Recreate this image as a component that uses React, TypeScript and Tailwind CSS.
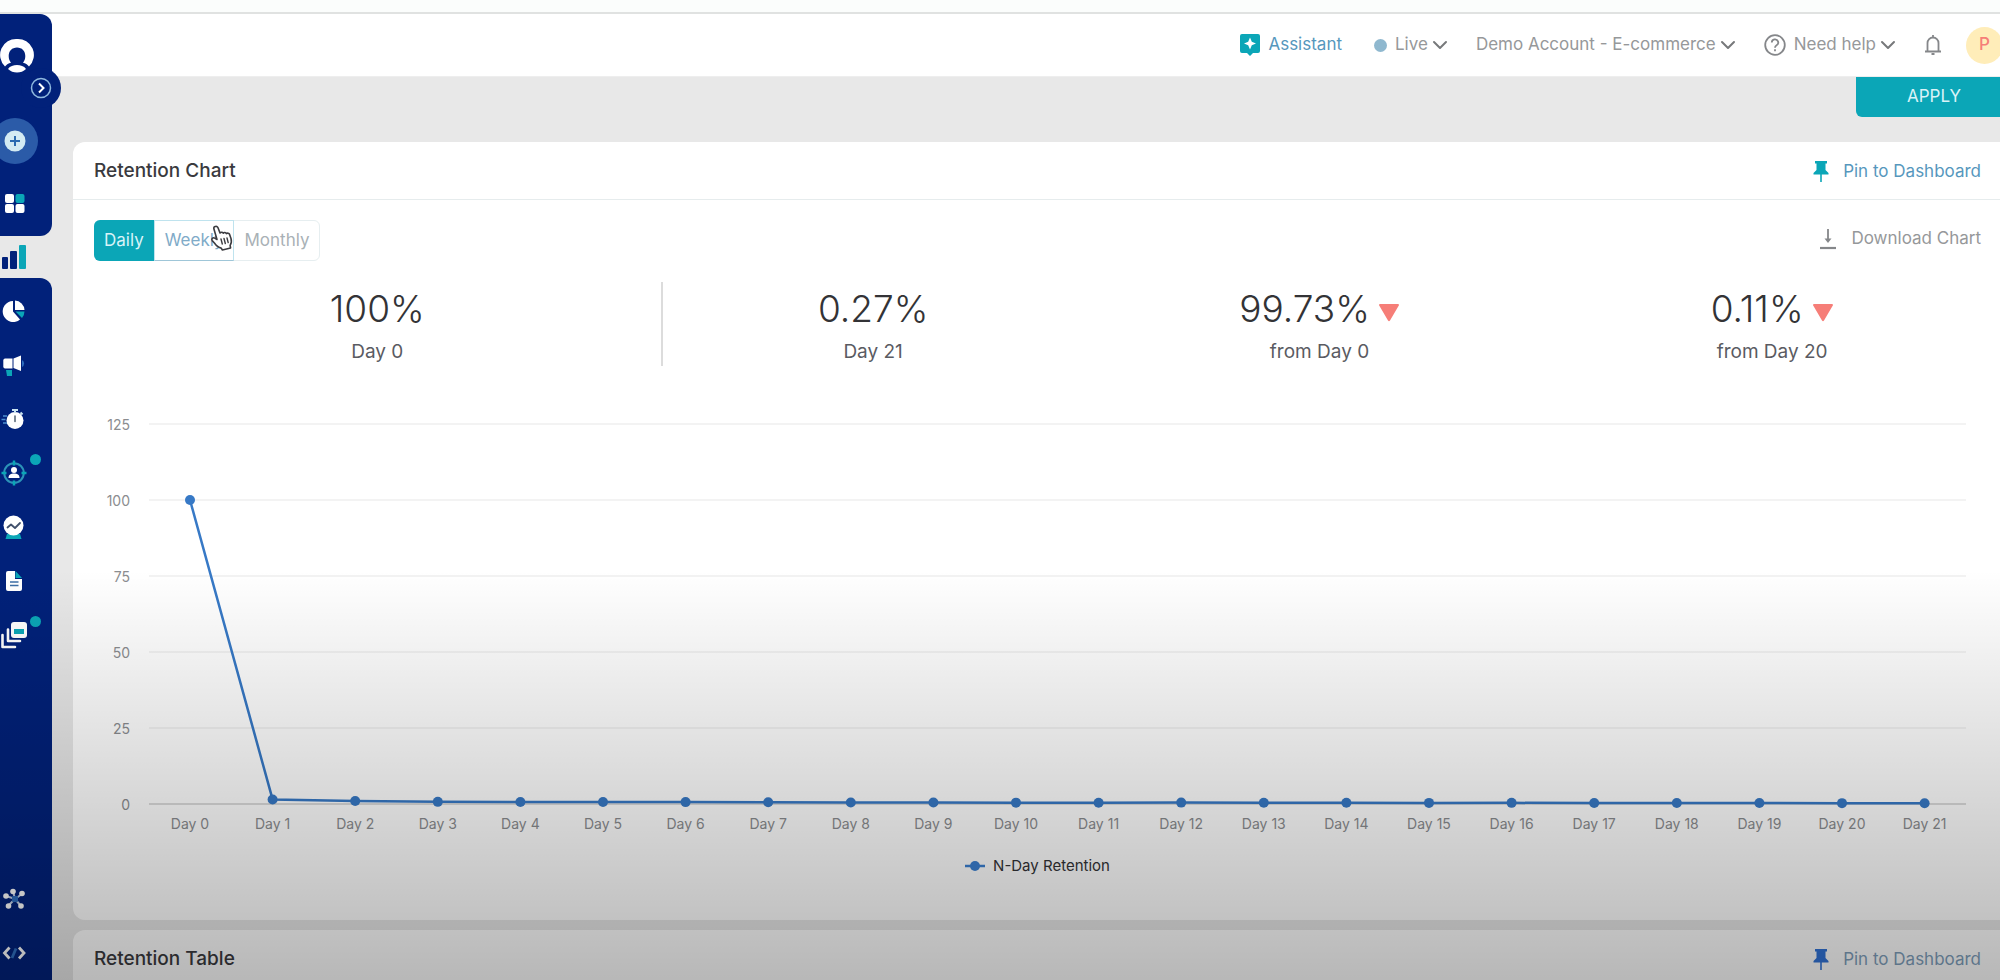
import { useState } from 'react';
import type { ReactNode } from 'react';
import { ChevronDown } from 'lucide-react';

const values = [100, 1.5, 1, 0.7, 0.68, 0.66, 0.62, 0.6, 0.5, 0.5, 0.45, 0.42, 0.46, 0.4, 0.42, 0.36, 0.38, 0.32, 0.3, 0.3, 0.28, 0.27];
const ticks = [125, 100, 75, 50, 25, 0];

// chart space: 76 units per 25 points, days 82.6 units apart
const toX = (day: number) => 96 + day * 82.6;
const toY = (value: number) => 404 - value * 3.04;

const BarsIcon = () => (
  <svg width="28" height="28" viewBox="0 0 28 28">
    <rect x="2" y="14" width="6" height="12" rx="1" fill="#01217a" />
    <rect x="10" y="8" width="7" height="18" rx="1" fill="#01217a" />
    <rect x="19" y="2" width="7" height="24" rx="1" fill="#0ba6b7" />
  </svg>
);

const PieIcon = () => (
  <svg width="28" height="28" viewBox="0 0 28 28">
    <path d="M13 4a10.500 10.500 0 1 0 7 18.500l-7-8z" fill="#fff" />
    <path d="M15 3.500a10 10 0 0 1 9.500 9.500H15z" fill="#fff" />
    <path d="M15.500 14.500h9a10 10 0 0 1-2.500 6.500z" fill="#0ba6b7" />
  </svg>
);

const MegaphoneIcon = () => (
  <svg width="28" height="28" viewBox="0 0 28 28">
    <path d="M5 7.500h7.500v10H5A1.800 1.800 0 0 1 3.300 16V9A1.800 1.800 0 0 1 5 7.500z" fill="#fff" />
    <path d="M13.500 7.500L21 4.500V20l-7.500-3z" fill="#fff" />
    <path d="M22 9a4 4 0 0 1 0 7z" fill="#2f6fc0" />
    <path d="M6 19h6v6H7z" fill="#0ba6b7" />
  </svg>
);

const StopwatchIcon = () => (
  <svg width="28" height="28" viewBox="0 0 28 28" fill="none">
    <circle cx="15" cy="15.500" r="8.500" fill="#fff" />
    <path d="M12 5h6M15 5v3M20.500 7.500l2 2" stroke="#c9e4f1" strokeWidth="2" />
    <path d="M15 11v5.500" stroke="#51606f" strokeWidth="1.500" strokeLinecap="round" />
    <path d="M3 11h4M1.500 14.500h4M3 18h4" stroke="#4c8ed0" strokeWidth="1.300" />
  </svg>
);

const TargetIcon = () => (
  <svg width="28" height="28" viewBox="0 0 28 28" fill="none">
    <circle cx="14" cy="14" r="9.800" stroke="#2b93b8" strokeWidth="2" />
    <path d="M14 1.500v5M14 21.500v5M1.500 14h5M21.500 14h5" stroke="#0ba6b7" strokeWidth="2.500" />
    <circle cx="14" cy="11" r="3" fill="#fff" />
    <path d="M8.500 19c0-3.500 2.500-4.500 5.500-4.500s5.500 1 5.500 4.500z" fill="#fff" />
  </svg>
);

const ForecastIcon = () => (
  <svg width="28" height="28" viewBox="0 0 28 28" fill="none">
    <path d="M7 21h13l1.500 5h-16z" fill="#0ba6b7" />
    <circle cx="13.500" cy="12.500" r="10" fill="#fff" />
    <path d="M7.500 14.500l3.500-3 4 3.500 5-5" stroke="#41506b" strokeWidth="1.800" strokeLinejoin="round" strokeLinecap="round" />
  </svg>
);

const ReportIcon = () => (
  <svg width="28" height="28" viewBox="0 0 28 28" fill="none">
    <path d="M8 4h7v8h7v10a2 2 0 0 1-2 2H8a2 2 0 0 1-2-2V6a2 2 0 0 1 2-2z" fill="#fff" />
    <path d="M15.500 4l6.500 7h-6.500z" fill="#0ba6b7" />
    <path d="M10 15h8.500M10 18.500h8.500" stroke="#3c6ea5" strokeWidth="1.400" />
  </svg>
);

const ContentIcon = () => (
  <svg width="28" height="30" viewBox="0 0 28 30" fill="none">
    <rect x="11" y="2" width="16" height="16" rx="3" fill="#fff" />
    <rect x="14" y="9" width="10" height="5" fill="#0ba6b7" />
    <path d="M8 9.500V21h12" stroke="#fff" strokeWidth="2.600" strokeLinejoin="round" strokeLinecap="round" />
    <path d="M2.500 15v12H15" stroke="#fff" strokeWidth="2.600" strokeLinejoin="round" strokeLinecap="round" />
  </svg>
);

const HubIcon = () => (
  <svg width="28" height="28" viewBox="0 0 28 28">
    <path d="M6 11l9 3 7-5M13 6l2 8-7 7M15 14l6 7" stroke="#c4d3ea" strokeWidth="2" fill="none" />
    <rect x="12" y="11" width="6" height="6" rx="1" fill="#2f6fc0" />
    <g fill="#fff">
      <circle cx="6" cy="11" r="2.800" />
      <circle cx="13" cy="6.500" r="2.800" />
      <circle cx="22" cy="8.500" r="2.800" />
      <circle cx="8.500" cy="21" r="2.800" />
      <circle cx="21" cy="21" r="2.800" />
    </g>
  </svg>
);

const CodeIcon = () => (
  <svg width="28" height="28" viewBox="0 0 28 28" fill="none" strokeWidth="2.800">
    <path d="M9.500 8.500L4.500 14l5 5.500M19 8.500l5 5.500-5 5.500" stroke="#fff" />
    <path d="M16 9.500l-4 9.500" stroke="#2f6fc0" />
  </svg>
);

const PinIcon = ({ className }: { className: string }) => (
  <svg width="16" height="22" viewBox="0 0 16 22" className={className}>
    <path d="M2 0h12v2.500h-1.500V9l3 3v1.500H.5V12l3-3V2.500H2z" fill="currentColor" />
    <path d="M8 13v8" stroke="currentColor" strokeWidth="1.600" />
  </svg>
);

const DownTriangle = () => (
  <svg width="22" height="18" viewBox="0 0 22 18" className="mt-2">
    <path d="M2 0h18a1 1 0 0 1 .8 1.600L12 16.500a1.200 1.200 0 0 1-2 0L1.200 1.600A1 1 0 0 1 2 0z" fill="#f67e78" />
  </svg>
);

const HandCursor = () => (
  <svg width="24" height="26" viewBox="0 0 24 26" className="absolute left-[115px] top-1 pointer-events-none">
    <path
      d="M5 1.600c1.200-.6 2.500 0 3 1.200l2 5.200c.7-1 2.500-1 3.200.2.900-1.100 2.600-.9 3.200.4 1-.9 2.700-.5 3.200.8l1.400 4.200c.8 2.700.4 5-.9 6.800l.5 2.600-8.200 2-1.200-1.900c-2.700-.4-5-2.600-6.800-5.100l-2.200-2.400c-1.200-1.500.7-3.600 2.500-2.500l2.300 1.400L4 4.200C3.600 3.100 4 2 5 1.600z"
      fill="#fff"
      stroke="#3c3c40"
      strokeWidth="1.600"
      strokeLinejoin="round"
    />
    <path d="M11 14l1.300 5M14 13.500l1.300 5M17 13l1.200 4.600" stroke="#3c3c40" strokeWidth="1.400" strokeLinecap="round" />
  </svg>
);

const navItems = [
  { label: 'Segments', icon: <PieIcon />, dot: false },
  { label: 'Campaigns', icon: <MegaphoneIcon />, dot: false },
  { label: 'Real time', icon: <StopwatchIcon />, dot: false },
  { label: 'Personalize', icon: <TargetIcon />, dot: true },
  { label: 'Predictions', icon: <ForecastIcon />, dot: false },
  { label: 'Reports', icon: <ReportIcon />, dot: false },
  { label: 'Content', icon: <ContentIcon />, dot: true },
];

function NavButton({ label, dot, children }: { label: string; dot?: boolean; children: ReactNode }) {
  return (
    <button aria-label={label} className="relative h-[54px] w-full shrink-0 flex items-center">
      {children}
      {dot && <span className="absolute left-[30px] top-2 w-[11px] h-[11px] rounded-full bg-[#0ba6b7]" />}
    </button>
  );
}

function Sidebar() {
  return (
    <aside className="relative z-10 w-[52px] shrink-0 flex flex-col bg-[linear-gradient(#fff_63px,#e8e8e8_63px)]">
      <button
        aria-label="Expand menu"
        className="absolute left-[21px] top-[54px] w-10 h-10 rounded-full bg-[#01217a] flex items-center justify-center"
      >
        <svg width="22" height="22" viewBox="0 0 22 22" fill="none">
          <circle cx="11" cy="11" r="9.500" stroke="#8fb9de" strokeWidth="1.500" />
          <path d="M9 6.500l4.500 4.500L9 15.500" stroke="#fff" strokeWidth="2" />
        </svg>
      </button>

      <div className="bg-[#01217a] rounded-r-xl pb-3">
        <a href="#" aria-label="Home" className="h-[84px] flex items-center">
          <svg width="34" height="36" viewBox="0 0 34 36">
            <path
              d="M17 1a16 16 0 0 1 12 27.500c-1.500-2-3.500-3.200-6-3.800 1.500-1.700 2.300-4 2.300-6.700 0-5-3.300-8.500-8.300-8.500S8.700 13 8.700 18c0 2.700.8 5 2.300 6.700-2.500.6-4.500 1.800-6 3.800A16 16 0 0 1 17 1z"
              fill="#fff"
            />
            <path d="M8 31c2-3 5.500-4 9-4s7 1 9 4c-2.500 2.500-5.500 3.500-9 3.500S10.500 33.500 8 31z" fill="#fff" />
          </svg>
        </a>
        <div className="h-[86px] flex items-center">
          <button aria-label="Create" className="-ml-2 w-[46px] h-[46px] shrink-0 rounded-full bg-[#2b5ba8] flex items-center justify-center">
            <svg width="22" height="22" viewBox="0 0 22 22">
              <circle cx="11" cy="11" r="10.500" fill="#d3ebf3" />
              <path d="M11 6v10M6 11h10" stroke="#2b6bb0" strokeWidth="2" />
            </svg>
          </button>
        </div>
        <button aria-label="Dashboard" className="h-10 flex items-center">
          <svg width="28" height="28" viewBox="0 0 28 28" fill="#fff">
            <rect x="5" y="4" width="9" height="9" rx="2" />
            <rect x="15.500" y="4" width="9" height="9" rx="2" fill="#0ba6b7" />
            <rect x="5" y="14" width="9" height="9" rx="2" />
            <rect x="15.500" y="14" width="9" height="9" rx="2" />
          </svg>
        </button>
      </div>

      <button aria-label="Analytics" className="h-[42px] shrink-0 flex items-center">
        <BarsIcon />
      </button>

      <nav className="flex-1 bg-[#01217a] rounded-tr-xl pt-[6px] flex flex-col">
        {navItems.map((item) => (
          <NavButton key={item.label} label={item.label} dot={item.dot}>
            {item.icon}
          </NavButton>
        ))}
        <div className="mt-auto">
          <NavButton label="Integrations">
            <HubIcon />
          </NavButton>
          <NavButton label="Developers">
            <CodeIcon />
          </NavButton>
        </div>
      </nav>
    </aside>
  );
}

const Chevron = () => <ChevronDown className="w-6 h-6 text-[#77797b]" strokeWidth={2} />;

function Header() {
  return (
    <header className="h-[63px] shrink-0 bg-white border-b border-[#eeeeee] flex items-center justify-end gap-6 text-[17px] text-[#96989a]">
      <button className="mr-2 flex items-center gap-2 text-[#5697bd]">
        <svg width="20" height="22" viewBox="0 0 20 22">
          <path d="M2 0h16a2 2 0 0 1 2 2v15a2 2 0 0 1-2 2h-5l-3 3-3-3H2a2 2 0 0 1-2-2V2a2 2 0 0 1 2-2z" fill="#0ba6b7" />
          <path d="M10 3.500l1.800 4.200L16 9.500l-4.200 1.800L10 15.500l-1.800-4.200L4 9.500l4.200-1.800z" fill="#fff" />
        </svg>
        Assistant
      </button>
      <button className="flex items-center">
        <span className="mr-2 w-[13px] h-[13px] rounded-full bg-[#8fb8cf]" />
        Live
        <Chevron />
      </button>
      <button className="flex items-center">
        Demo Account - E-commerce
        <Chevron />
      </button>
      <button className="flex items-center">
        <svg width="22" height="22" viewBox="0 0 22 22" fill="none" stroke="#85878a" strokeWidth="1.800" className="mr-2">
          <circle cx="11" cy="11" r="9.800" />
          <path d="M7.800 8.600a3.200 3.200 0 1 1 4.800 2.700c-1.100.7-1.600 1.200-1.600 2.500M11 15.200v2" />
        </svg>
        Need help
        <Chevron />
      </button>
      <button aria-label="Notifications">
        <svg width="18" height="22" viewBox="0 0 18 22" fill="none" stroke="#85878a" strokeWidth="1.800">
          <path d="M1 17.500h16M3.500 17V9a5.500 5.500 0 0 1 11 0v8M9 1v2.500" />
          <path d="M7.500 20h3" strokeWidth="2" />
        </svg>
      </button>
      <button className="-mr-[3px] w-[37px] h-[37px] rounded-full bg-[#ffedb9] text-[#f67e78] font-medium">P</button>
    </header>
  );
}

function CardHeader({ title, pinClass, linkClass }: { title: string; pinClass: string; linkClass: string }) {
  return (
    <div className="h-[58px] border-b border-[#e6eced] pt-0.5 pl-[21px] pr-[19px] flex items-center justify-between">
      <h2 className="text-[19px] font-medium text-[#3a3a3e]">{title}</h2>
      <a href="#" className={`flex items-center gap-3.5 text-[17px] ${linkClass}`}>
        <PinIcon className={pinClass} />
        Pin to Dashboard
      </a>
    </div>
  );
}

function Stat({ value, label, down }: { value: string; label: string; down?: boolean }) {
  return (
    <div className="flex flex-col items-center">
      <div className="flex items-center gap-2 text-[37px] leading-[46px] font-light text-[#333336]">
        {value}
        {down && <DownTriangle />}
      </div>
      <p className="mt-2 text-[19px] leading-6 text-[#5a5b62]">{label}</p>
    </div>
  );
}

function RetentionChart() {
  const points = values.map((v, i) => `${toX(i)},${toY(v)}`).join(' ');
  return (
    <div className="mt-[34px]">
      <svg viewBox="0 0 1887 436" className="w-full" role="img" aria-label="N-Day Retention">
        {ticks.map((t) => (
          <g key={t}>
            <line x1="55" x2="1872" y1={toY(t)} y2={toY(t)} stroke={t === 0 ? '#dcdcdc' : '#f3f3f3'} strokeWidth="2" />
            <text x="36" y={toY(t) + 6} textAnchor="end" fontSize="14" fill="#8b8d90">
              {t}
            </text>
          </g>
        ))}
        <polyline points={points} fill="none" stroke="#3779c6" strokeWidth="2.500" />
        {values.map((v, i) => (
          <g key={i}>
            <circle cx={toX(i)} cy={toY(v)} r="5" fill="#3779c6" />
            <text x={toX(i)} y="429" textAnchor="middle" fontSize="14" fill="#8b8d90">
              Day {i}
            </text>
          </g>
        ))}
      </svg>
      <div className="mt-5 flex items-center justify-center gap-2 text-[15px] leading-5 text-[#333336]">
        <svg width="20" height="12" viewBox="0 0 20 12">
          <path d="M0 6h20" stroke="#3b80d2" strokeWidth="2.500" />
          <circle cx="10" cy="6" r="5" fill="#3b80d2" />
        </svg>
        N-Day Retention
      </div>
    </div>
  );
}

const tabs = ['Daily', 'Weekly', 'Monthly'];

export default function App() {
  const [tab, setTab] = useState('Daily');

  return (
    <div className="relative h-screen overflow-hidden flex flex-col bg-[#e8e8e8] font-['Inter','Liberation_Sans',sans-serif]">
      <div className="h-[14px] shrink-0 bg-[#fbfdfc] border-b-2 border-[#e0e2e1]" />
      <div className="flex-1 min-h-0 flex">
        <Sidebar />
        <div className="flex-1 min-w-0 flex flex-col overflow-hidden">
          <Header />
          <main className="flex-1 min-h-0 overflow-hidden pl-[21px]">
            <div className="flex justify-end">
              <button className="-mr-3 w-[156px] h-10 rounded-b-md bg-[#0ba6b7] text-[17px] text-[#d9f3f8]">APPLY</button>
            </div>

            <section className="mt-[25px] rounded-l-xl bg-white pb-[44px]">
              <CardHeader title="Retention Chart" pinClass="text-[#0ba6b7]" linkClass="text-[#5697bd]" />
              <div className="pl-[21px] pr-[19px] pt-5">
                <div className="flex items-start justify-between">
                  <div className="relative flex h-[41px] rounded-md border border-[#e6eef0] text-[17px]">
                    {tabs.map((t) => (
                      <button
                        key={t}
                        onClick={() => setTab(t)}
                        className={`-my-px px-[10px] first:-ml-px first:rounded-l-md ${
                          tab === t
                            ? 'bg-[#0ba6b7] text-[#d9f3f8]'
                            : t === 'Weekly'
                              ? 'border border-[#bfe3ee] border-b-[#9fc6d8] text-[#7fabc8]'
                              : 'text-[#a9b1b6]'
                        }`}
                      >
                        {t}
                      </button>
                    ))}
                    <HandCursor />
                  </div>
                  <button className="h-[38px] flex items-center gap-3.5 text-[17px] text-[#96989a]">
                    <svg width="18" height="22" viewBox="0 0 18 22" fill="none" stroke="#85878a">
                      <path d="M9 1v12" strokeWidth="1.800" />
                      <path d="M5.500 10.500h7L9 15z" fill="#85878a" stroke="none" />
                      <path d="M1 20h16" strokeWidth="2.200" />
                    </svg>
                    Download Chart
                  </button>
                </div>

                <div className="mt-[21px] -mr-2 h-[84px] flex">
                  <div className="w-[30%] border-r-2 border-[#dcdcdc] flex justify-center pt-1">
                    <Stat value="100%" label="Day 0" />
                  </div>
                  <div className="flex-1 flex justify-around pt-1">
                    <Stat value="0.27%" label="Day 21" />
                    <Stat value="99.73%" label="from Day 0" down />
                    <Stat value="0.11%" label="from Day 20" down />
                  </div>
                </div>

                <RetentionChart />
              </div>
            </section>

            <section className="mt-[10px] rounded-l-xl bg-white pb-16">
              <CardHeader title="Retention Table" pinClass="text-[#3274d8]" linkClass="text-[#7f9fbc]" />
            </section>
          </main>
        </div>
      </div>

      {/* Bottom shade */}
      <div className="absolute inset-x-0 bottom-0 z-20 h-[410px] pointer-events-none bg-linear-to-b from-black/0 to-black/28" />
    </div>
  );
}
